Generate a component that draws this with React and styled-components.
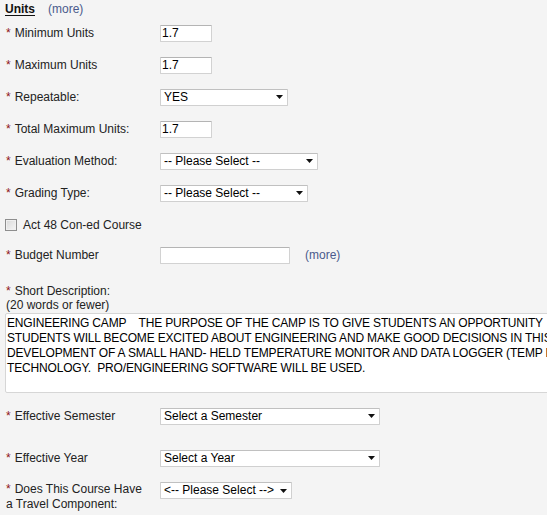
import React from 'react';
import styled, { createGlobalStyle } from 'styled-components';

const GlobalStyle = createGlobalStyle`
  html, body {
    margin: 0;
    padding: 0;
    background: #f4f4f4;
    overflow: hidden;
  }
  body {
    font-family: "Liberation Sans", Arial, sans-serif;
    font-size: 12px;
    color: #222;
  }
`;

const Page = styled.div`
  width: 547px;
  height: 515px;
  overflow: hidden;
`;

const Header = styled.div`
  height: 17px;
  box-sizing: border-box;
  padding: 2px 0 0 5px;
  line-height: 14px;
  display: flex;
  gap: 13px;
`;

const Title = styled.span`
  font-weight: bold;
  color: #111;
  text-decoration: underline;
  text-underline-offset: 2px;
`;

const More = styled.span`
  color: #4a5a8c;
`;

const Row = styled.div`
  display: grid;
  grid-template-columns: 154px auto auto;
  justify-content: start;
  align-items: ${(p) => (p.$top ? 'start' : 'center')};
  height: ${(p) => p.$h || 32}px;
  box-sizing: border-box;
  padding: ${(p) => (p.$top ? '5px' : '0')} 0 0 6px;
  line-height: 15px;
`;

const Label = styled.div`
  white-space: nowrap;
`;

const Req = styled.span`
  color: #8e1414;
  margin-right: 4px;
`;

const TextBox = styled.div`
  width: ${(p) => p.$w || 52}px;
  height: 17px;
  box-sizing: border-box;
  border: 1px solid #d2d2d2;
  border-top-color: #b4b4b4;
  border-radius: 1px;
  background: #fff;
  padding: 0 1px;
  line-height: 15px;
  color: #000;
`;

const SelectBox = styled.div`
  width: ${(p) => p.$w}px;
  height: 17px;
  box-sizing: border-box;
  border: 1px solid #d0d0d0;
  border-top-color: #c0c0c0;
  border-radius: 1px;
  background: #fff;
  display: flex;
  align-items: center;
  justify-content: space-between;
  padding: 0 4px 0 3px;
  color: #000;
  white-space: nowrap;
`;

const MoreLink = styled(More)`
  margin-left: 15px;
`;

const CheckRow = styled.div`
  height: 32px;
  display: flex;
  align-items: center;
  padding-left: 5px;
  gap: 6px;
`;

const Check = styled.span`
  width: 12px;
  height: 12px;
  box-sizing: border-box;
  border: 1px solid #8e8e8e;
  background: linear-gradient(135deg, #d9d9d9, #f6f6f6);
  box-shadow: inset 0 0 0 1px #f0f0f0;
`;

const DescBlock = styled.div`
  margin-top: 15px;
  line-height: 14px;
`;

const DescLabel = styled.div`
  padding-left: 6px;
`;

const DescArea = styled.textarea`
  display: block;
  margin: 1px 0 0 5px;
  width: 580px;
  height: 80px;
  box-sizing: border-box;
  border: 1px solid #d6d6d6;
  border-radius: 2px;
  background: #fff;
  padding: 2px 1px;
  font-family: "Liberation Sans", Arial, sans-serif;
  font-size: 12px;
  line-height: 15px;
  letter-spacing: -0.17px;
  color: #000;
  resize: none;
  overflow: hidden;
  white-space: pre;
`;

const Arrow = () => (
  <svg width="7" height="4" viewBox="0 0 7 4">
    <polygon points="0,0 7,0 3.5,4" fill="#111" />
  </svg>
);

const Select = ({ w, children }) => (
  <SelectBox $w={w}>
    <span>{children}</span>
    <Arrow />
  </SelectBox>
);

const Field = ({ label, children, h, top }) => (
  <Row $h={h} $top={top}>
    <Label>
      <Req>*</Req>
      {label}
    </Label>
    {children}
  </Row>
);

const description = [
  'ENGINEERING CAMP    THE PURPOSE OF THE CAMP IS TO GIVE STUDENTS AN OPPORTUNITY',
  'STUDENTS WILL BECOME EXCITED ABOUT ENGINEERING AND MAKE GOOD DECISIONS IN THIS',
  'DEVELOPMENT OF A SMALL HAND- HELD TEMPERATURE MONITOR AND DATA LOGGER (TEMP DUINO)',
  'TECHNOLOGY.  PRO/ENGINEERING SOFTWARE WILL BE USED.',
].join('\n');

export default function App() {
  return (
    <Page>
      <GlobalStyle />
      <Header>
        <Title>Units</Title>
        <More>(more)</More>
      </Header>

      <Field label="Minimum Units">
        <TextBox>1.7</TextBox>
      </Field>
      <Field label="Maximum Units">
        <TextBox>1.7</TextBox>
      </Field>
      <Field label="Repeatable:">
        <Select w={128}>YES</Select>
      </Field>
      <Field label="Total Maximum Units:">
        <TextBox>1.7</TextBox>
      </Field>
      <Field label="Evaluation Method:">
        <Select w={158}>-- Please Select --</Select>
      </Field>
      <Field label="Grading Type:">
        <Select w={148}>-- Please Select --</Select>
      </Field>

      <CheckRow>
        <Check />
        <span>Act 48 Con-ed Course</span>
      </CheckRow>

      <Field label="Budget Number" h={28}>
        <TextBox $w={130} />
        <MoreLink>(more)</MoreLink>
      </Field>

      <DescBlock>
        <DescLabel>
          <Req>*</Req>Short Description:
          <br />
          (20 words or fewer)
        </DescLabel>
        <DescArea readOnly value={description} />
      </DescBlock>

      <Field label="Effective Semester" h={46}>
        <Select w={220}>Select a Semester</Select>
      </Field>
      <Field label="Effective Year" h={38}>
        <Select w={220}>Select a Year</Select>
      </Field>
      <Field
        top
        label={
          <>
            Does This Course Have
            <br />
            a Travel Component:
          </>
        }
      >
        <Select w={132}>&lt;-- Please Select --&gt;</Select>
      </Field>
    </Page>
  );
}
